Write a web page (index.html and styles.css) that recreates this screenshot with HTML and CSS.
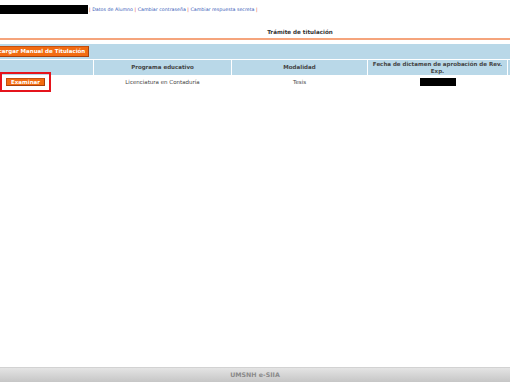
FILE: index.html
```html
<!DOCTYPE html>
<html>
<head>
  <meta charset="UTF-8">
  <title>Trámite de titulación</title>
  <link rel="stylesheet" href="styles.css">
</head>
<body>
  <div class="page">
    <div class="topbar">
      <span class="redacted user"></span>
      <span class="links"><span class="sep">|</span> <a href="#">Datos de Alumno</a> <span class="sep">|</span> <a href="#">Cambiar contraseña</a> <span class="sep">|</span> <a href="#">Cambiar respuesta secreta</a> <span class="sep">|</span></span>
    </div>

    <div class="title">Trámite de titulación</div>

    <table class="grid">
      <colgroup>
        <col class="c1">
        <col class="c2">
        <col class="c3">
        <col class="c4">
        <col class="c5">
      </colgroup>
      <tr>
        <td class="band" colspan="5"><button class="btn manual">Descargar Manual de Titulación</button></td>
      </tr>
      <tr class="head">
        <th></th>
        <th>Programa educativo</th>
        <th>Modalidad</th>
        <th>Fecha de dictamen de aprobación de Rev. Exp.</th>
        <th></th>
      </tr>
      <tr class="row">
        <td class="first"><button class="btn mark">Examinar</button></td>
        <td>Licenciatura en Contaduría</td>
        <td>Tesis</td>
        <td><span class="redacted date"></span></td>
        <td></td>
      </tr>
    </table>

    <div class="footer">UMSNH e-SIIA</div>
  </div>
</body>
</html>
```

FILE: styles.css
```css
/* e-SIIA tramite page */
html, body {
  margin: 0;
  padding: 0;
  overflow: hidden;
}

body {
  font-family: "DejaVu Sans", Verdana, sans-serif;
  font-size: 5.5px;
  color: #333;
  background: #fff;
}

.page {
  display: flex;
  flex-direction: column;
  min-height: 100vh;
}

.redacted {
  display: inline-block;
  background: #000;
}

.topbar {
  display: flex;
  align-items: center;
  height: 18px;
  gap: 1px;
}

.redacted.user {
  width: 88px;
  height: 9px;
}

.links {
  font-size: 4.75px;
  color: #3a5bb8;
}

.links a {
  color: #3a5bb8;
  text-decoration: none;
}

.links .sep {
  color: #e0383a;
}

.title {
  text-align: center;
  font-weight: bold;
  font-size: 5.6px;
  color: #333;
  padding: 11px 0 3px 90px;
  border-bottom: 2px solid #f5a47c;
}

.grid {
  border-collapse: separate;
  border-spacing: 1px;
  margin: 3px 0 0 -1px;
  table-layout: fixed;
  width: 556px;
}

.c1 { width: 93px; }
.c2 { width: 137px; }
.c3 { width: 135px; }
.c4 { width: 139px; }
.c5 { width: 46px; }

.grid td,
.grid th {
  padding: 0;
  text-align: center;
}

.grid td.band {
  background: #b9d8e8;
  height: 15px;
  text-align: left;
}

.btn {
  font-family: "DejaVu Sans", Verdana, sans-serif;
  font-weight: bold;
  font-size: 5.5px;
  color: #fff;
  background: #f26c12;
  border: 1px solid #c54f0e;
  border-right-color: #a8410b;
  border-bottom-color: #a8410b;
  padding: 1px 3px;
  line-height: 7px;
}

.btn.manual {
  margin-left: -17px;
}

.head th {
  background: #b9d8e8;
  height: 15px;
  font-weight: bold;
  color: #444;
  line-height: 7px;
}

.row td {
  height: 11px;
  color: #444;
  vertical-align: middle;
}

.grid td.first {
  text-align: left;
  padding-left: 6px;
}

.btn.mark {
  outline: 2px solid #e5141c;
  outline-offset: 4px;
  padding: 0 4px;
  line-height: 6px;
}

.redacted.date {
  width: 36px;
  height: 8px;
  vertical-align: middle;
}

.footer {
  margin-top: auto;
  height: 14px;
  line-height: 14px;
  text-align: center;
  font-weight: bold;
  font-size: 6.3px;
  color: #8a8a8a;
  background: linear-gradient(#e4e4e4, #c6c6c6);
  border-top: 1px solid #d2d2d2;
}
```
